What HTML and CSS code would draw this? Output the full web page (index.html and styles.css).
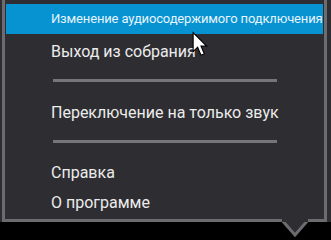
FILE: index.html
```html
<!DOCTYPE html>
<html>
<head>
<meta charset="utf-8">
<link rel="stylesheet" href="styles.css">
</head>
<body>
<div class="frame">
  <div class="menu">
    <div class="item hl">Изменение аудиосодержимого подключения</div>
    <div class="item exit">Выход из собрания</div>
    <div class="sep s1"></div>
    <div class="item mid">Переключение на только звук</div>
    <div class="sep s2"></div>
    <div class="item small">Справка</div>
    <div class="item small">О программе</div>
  </div>
  <svg class="notch" width="32" height="22" viewBox="0 0 32 22">
    <polygon points="1,0 15,16 29,0" fill="#2e2e32" stroke="#6c6c70" stroke-width="3"/>
    <rect x="2" y="0" width="26" height="3" fill="#2e2e32"/>
  </svg>
  <svg class="cursor" width="18" height="28" viewBox="0 0 16 24">
    <path d="M1,1 L1,18 L5,14 L8,21 L11,20 L8,13 L13,13 Z" fill="#fff" stroke="#000" stroke-width="1"/>
  </svg>
</div>
</body>
</html>
```
FILE: styles.css
```css
html, body {
  margin: 0;
  padding: 0;
  background: #000;
}
.frame {
  position: relative;
  width: 331px;
  height: 240px;
  background: #000;
  font-family: Roboto, "Noto Sans", sans-serif;
}
.menu {
  margin: 0 4px 0 2px;
  padding: 4px 1px 1px 1px;
  background: #2e2e32;
  border-left: 3px solid #6c6c70;
  border-right: 3px solid #6c6c70;
  border-bottom: 3px solid #6c6c70;
  box-shadow: -2px 0 0 #2e2e32, 4px 0 0 #2e2e32;
}
.item {
  color: #ececec;
  padding-left: 45px;
  font-size: 16px;
  white-space: nowrap;
}
.hl {
  background: #0793d2;
  color: #e6f4fc;
  font-size: 13px;
  letter-spacing: -0.15px;
  line-height: 30px;
}
.exit {
  line-height: 36px;
}
.mid {
  line-height: 36px;
}
.small {
  line-height: 30px;
}
.sep {
  height: 3px;
  margin-left: 47px;
  margin-right: 46px;
  background: #76767a;
}
.s1 {
  margin-top: 9px;
  margin-bottom: 13px;
}
.s2 {
  margin-top: 9px;
  margin-bottom: 15px;
}
.notch {
  position: absolute;
  left: 280px;
  top: 219px;
}
.cursor {
  position: absolute;
  left: 192px;
  top: 31px;
}
```
